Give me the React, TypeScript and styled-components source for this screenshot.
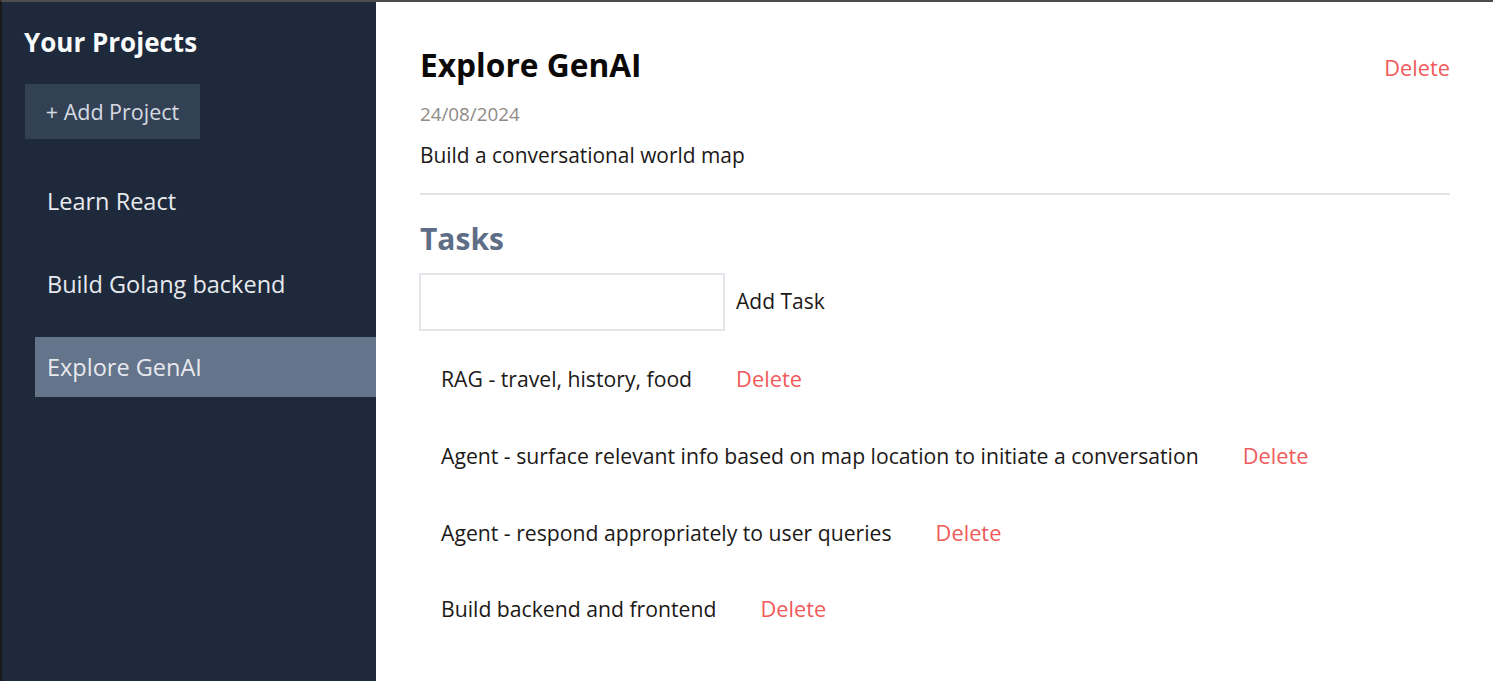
import React from "react";
import styled, { createGlobalStyle } from "styled-components";

const GlobalStyle = createGlobalStyle`
  * { box-sizing: border-box; }
  html, body { margin: 0; padding: 0; background: #ffffff; }
  body { font-family: "Open Sans", "Noto Sans", sans-serif; }
`;

const Page = styled.div`
  display: flex;
  min-height: 681px;
  height: 100vh;
  border-top: 2px solid #4d4d4d;
  border-left: 2px solid #1a1a1a;
`;

const Sidebar = styled.aside`
  width: 374px;
  flex-shrink: 0;
  background: #1e293b;
  padding: 22px 0 0 23px;
  display: flex;
  flex-direction: column;
`;

const SidebarTitle = styled.h2`
  margin: 0 0 0 -1px;
  font-size: 26px;
  line-height: 36px;
  font-weight: 700;
  color: #f8fafc;
`;

const AddProjectButton = styled.button`
  margin-top: 24px;
  width: 175px;
  height: 55px;
  border: none;
  background: #334155;
  color: #d6dbe2;
  font-family: inherit;
  font-size: 21.5px;
  text-align: center;
  padding: 0;
`;

const ProjectList = styled.ul`
  list-style: none;
  margin: 32px 0 0 10px;
  padding: 0;
  display: flex;
  flex-direction: column;
  gap: 23px;
`;

const ProjectItem = styled.li<{ $active?: boolean }>`
  height: 60px;
  display: flex;
  align-items: center;
  padding-left: 12px;
  font-size: 23.5px;
  color: #e7e9ee;
  background: ${(p) => (p.$active ? "#64748b" : "transparent")};
`;

const Main = styled.main`
  flex: 1;
  padding: 43px 43px 0 44px;
  display: flex;
  flex-direction: column;
`;

const Header = styled.header`
  display: flex;
  justify-content: space-between;
  align-items: flex-start;
`;

const HeaderText = styled.div`
  display: flex;
  flex-direction: column;
`;

const Title = styled.h1`
  margin: 0;
  font-size: 31.7px;
  line-height: 40px;
  font-weight: 700;
  color: #0c0a09;
`;

const DateText = styled.p`
  margin: 17px 0 0;
  font-size: 18.8px;
  line-height: 24px;
  color: #8f8a86;
`;

const Description = styled.p`
  margin: 15px 0 0;
  font-size: 20.9px;
  line-height: 28px;
  color: #1c1917;
`;

const DeleteLink = styled.button<{ $gap?: number }>`
  border: none;
  background: none;
  padding: 0;
  font-family: inherit;
  font-size: 21.8px;
  line-height: 28px;
  color: #f05a5a;
  margin-left: ${(p) => p.$gap ?? 0}px;
`;

const HeaderDelete = styled(DeleteLink)`
  margin-top: 9px;
`;

const Divider = styled.hr`
  margin: 24px 0 0;
  border: none;
  height: 2px;
  background: #e2e4e8;
`;

const TasksTitle = styled.h2`
  margin: 25px 0 0;
  font-size: 30px;
  line-height: 38px;
  font-weight: 700;
  color: #5e6e87;
`;

const AddRow = styled.div`
  margin-top: 15px;
  display: flex;
  align-items: center;
  gap: 11px;
`;

const TaskInput = styled.input`
  width: 306px;
  height: 58px;
  margin-left: -1px;
  border: 2px solid #e3e6ea;
  background: #fff;
  outline: none;
`;

const AddTaskButton = styled.button`
  border: none;
  background: none;
  padding: 0 0 3px;
  font-family: inherit;
  font-size: 21px;
  line-height: 28px;
  color: #1c1917;
`;

const TaskList = styled.ul`
  list-style: none;
  margin: 34px 0 0;
  padding: 0 0 0 21px;
  display: flex;
  flex-direction: column;
  gap: 48.8px;
`;

const TaskItem = styled.li`
  display: flex;
  align-items: center;
  height: 28px;
`;

const TaskText = styled.span`
  font-size: 21.2px;
  line-height: 28px;
  color: #1c1917;
`;

const tasks = [
  "RAG - travel, history, food",
  "Agent - surface relevant info based on map location to initiate a conversation",
  "Agent - respond appropriately to user queries",
  "Build backend and frontend",
];

const projects = ["Learn React", "Build Golang backend", "Explore GenAI"];

export default function App() {
  return (
    <>
      <GlobalStyle />
      <Page>
        <Sidebar>
          <SidebarTitle>Your Projects</SidebarTitle>
          <div>
            <AddProjectButton>+ Add Project</AddProjectButton>
          </div>
          <ProjectList>
            {projects.map((p) => (
              <ProjectItem key={p} $active={p === "Explore GenAI"}>
                {p}
              </ProjectItem>
            ))}
          </ProjectList>
        </Sidebar>
        <Main>
          <Header>
            <HeaderText>
              <Title>Explore GenAI</Title>
              <DateText>24/08/2024</DateText>
              <Description>Build a conversational world map</Description>
            </HeaderText>
            <HeaderDelete>Delete</HeaderDelete>
          </Header>
          <Divider />
          <TasksTitle>Tasks</TasksTitle>
          <AddRow>
            <TaskInput />
            <AddTaskButton>Add Task</AddTaskButton>
          </AddRow>
          <TaskList>
            {tasks.map((t) => (
              <TaskItem key={t}>
                <TaskText>{t}</TaskText>
                <DeleteLink $gap={44}>Delete</DeleteLink>
              </TaskItem>
            ))}
          </TaskList>
        </Main>
      </Page>
    </>
  );
}
